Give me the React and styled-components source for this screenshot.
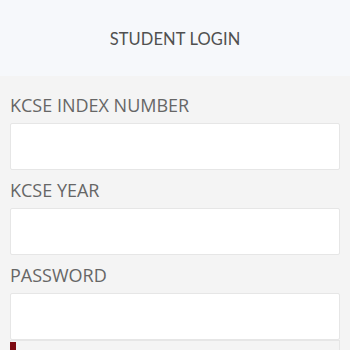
import styled, { createGlobalStyle } from "styled-components";

const GlobalStyle = createGlobalStyle`
  html, body {
    margin: 0;
    padding: 0;
    background: #f4f4f4;
  }
  * { box-sizing: border-box; }
`;

const Header = styled.div`
  height: 76px;
  background: #f6f8fb;
  display: flex;
  align-items: center;
  justify-content: center;
`;

const Title = styled.h1`
  margin: 0;
  font-family: "Lato", "Open Sans", sans-serif;
  font-weight: 400;
  font-size: 16.5px;
  letter-spacing: 0.1px;
  color: #505050;
  padding-top: 1px;
`;

const Form = styled.form`
  padding: 14px 10px 0;
  display: flex;
  flex-direction: column;
`;

const Label = styled.label`
  font-family: "Open Sans", sans-serif;
  font-size: 18px;
  line-height: 27px;
  color: #666;
  margin-top: 2px;
  margin-bottom: 4px;
`;

const Input = styled.input`
  height: 47px;
  width: 100%;
  background: #fff;
  border: 1px solid #e6e6e6;
  border-radius: 2px;
  margin-bottom: 5px;
  font-size: 16px;
  outline: none;
`;

const Footer = styled.div`
  position: relative;
  height: 20px;
  border: 1px solid #e6e6e6;
  border-bottom: none;
  margin-top: -5px;
`;

const Marker = styled.span`
  position: absolute;
  left: -1px;
  top: 1px;
  width: 6px;
  height: 20px;
  background: #7d0a12;
`;

export default function App() {
  return (
    <>
      <GlobalStyle />
      <Header>
        <Title>STUDENT LOGIN</Title>
      </Header>
      <Form>
        <Label>KCSE INDEX NUMBER</Label>
        <Input type="text" />
        <Label>KCSE YEAR</Label>
        <Input type="text" />
        <Label>PASSWORD</Label>
        <Input type="password" />
        <Footer>
          <Marker />
        </Footer>
      </Form>
    </>
  );
}
